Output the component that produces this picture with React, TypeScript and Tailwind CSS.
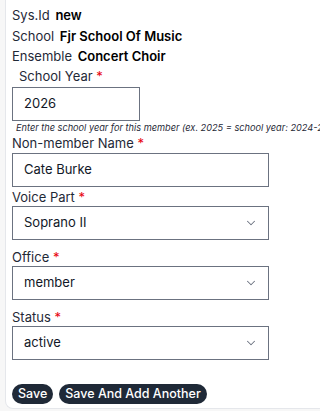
import { ChevronDown } from "lucide-react"

function Label({ text, className = "" }: { text: string; className?: string }) {
  return (
    <div className={"text-[13px] leading-[18px] text-[#1f2937] " + className}>
      {text} <span className="text-red-600">*</span>
    </div>
  )
}

function Select({ value }: { value: string }) {
  return (
    <div className="flex h-[34px] w-[257px] items-center justify-between border border-[#6b7280] bg-white pl-[11px] pr-[10px] text-[13px] text-[#111827]">
      <span>{value}</span>
      <ChevronDown className="h-[14px] w-[14px] text-[#6b7280]" strokeWidth={1.75} />
    </div>
  )
}

export default function App() {
  return (
    <div className="min-h-screen overflow-hidden bg-[#f7f7f7] font-['Inter',sans-serif]">
      <div className="ml-[5px] w-[400px] rounded-bl-lg border-b border-l border-[#e5e7eb] bg-white pb-[4px] pl-[6px] pt-[5px]">
        <div className="flex flex-col text-[13px] leading-[20.5px] text-[#1f2937]">
          <div>Sys.Id <span className="ml-[2px] font-semibold text-black">new</span></div>
          <div>School <span className="ml-[2px] font-semibold text-black">Fjr School Of Music</span></div>
          <div>Ensemble <span className="ml-[2px] font-semibold text-black">Concert Choir</span></div>
        </div>
        <Label text="School Year" className="ml-[7px]" />
        <div className="mt-[2px] flex h-[34px] w-[128px] items-center border border-[#6b7280] pl-[11px] text-[13px] text-[#111827]">2026</div>
        <div className="ml-[4px] whitespace-nowrap text-[9.2px] italic leading-[13px] text-[#1f2937]">
          Enter the school year for this member (ex. 2025 = school year: 2024-25)
        </div>
        <Label text="Non-member Name" />
        <div className="mt-[1px] flex h-[34px] w-[257px] items-center border border-[#6b7280] pl-[11px] text-[13px] text-[#111827]">Cate Burke</div>
        <Label text="Voice Part" className="mt-[1px]" />
        <Select value="Soprano II" />
        <Label text="Office" className="mt-[8px]" />
        <Select value="member" />
        <Label text="Status" className="mt-[8px]" />
        <Select value="active" />
        <div className="mt-[24px] flex gap-[6px]">
          <button className="h-[20px] rounded-full bg-[#1f2937] px-[6px] text-[12.5px] font-medium leading-[20px] text-white">Save</button>
          <button className="h-[20px] rounded-full bg-[#1f2937] px-[6px] text-[12.5px] font-medium leading-[20px] text-white">Save And Add Another</button>
        </div>
      </div>
    </div>
  )
}
